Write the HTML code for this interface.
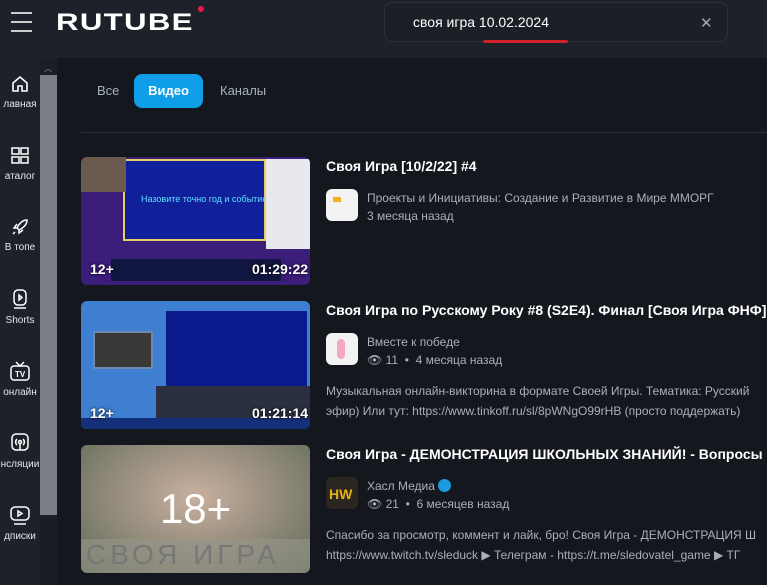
<!DOCTYPE html>
<html><head><meta charset="utf-8"><style>
*{margin:0;padding:0;box-sizing:border-box}
body{width:767px;height:585px;overflow:hidden;background:#14171d;font-family:"Liberation Sans","DejaVu Sans",sans-serif;color:#fff;position:relative}
.hdr{position:absolute;left:0;top:0;width:767px;height:58px;background:#1d2129}
.side{position:absolute;left:0;top:58px;width:40px;height:527px;background:#1d2129}
.sb{position:absolute;left:40px;top:58px;width:17px;height:527px;background:#1a1d23}
.thumbbar{position:absolute;left:40px;top:75px;width:17px;height:440px;background:#7c7e84}
.nav{position:absolute;left:0;width:40px;text-align:center;font-size:10px;color:#e6e6e6;white-space:nowrap;overflow:hidden}
.nav svg{display:block;margin:0 auto 5px}
.tab{position:absolute;top:74px;height:34px;line-height:34px;font-size:13px;color:#a8b3c0}
.title{position:absolute;left:326px;font-size:14px;font-weight:bold;color:#fff;white-space:nowrap}
.meta{position:absolute;left:367px;font-size:12px;color:#a9b0ba;line-height:18px;white-space:nowrap}
.desc{position:absolute;left:326px;font-size:12px;color:#a9b0ba;line-height:20px;white-space:nowrap}
.av{position:absolute;left:326px;width:32px;height:32px;border-radius:6px;background:#f3f3f3}
.th{position:absolute;left:81px;width:229px;height:128px;border-radius:6px;overflow:hidden}
.badge{position:absolute;font-size:14px;font-weight:bold;color:#fff;text-shadow:0 0 3px #000}
</style></head><body>
<div class="hdr">
 <div style="position:absolute;left:11px;top:12px;width:21px;height:2px;background:#ccc"></div>
 <div style="position:absolute;left:11px;top:21px;width:21px;height:2px;background:#ccc"></div>
 <div style="position:absolute;left:11px;top:30px;width:21px;height:2px;background:#ccc"></div>
 <div style="position:absolute;left:56px;top:9px;font-size:24px;font-weight:bold;letter-spacing:1px;color:#fff;transform:scaleX(1.3);transform-origin:left top">RUTUBE</div>
 <div style="position:absolute;left:198px;top:6px;width:6px;height:6px;border-radius:50%;background:#e8194c"></div>
 <div style="position:absolute;left:384px;top:2px;width:344px;height:40px;border:1px solid #2c313a;border-radius:8px;background:#1b1f26"></div>
 <div style="position:absolute;left:413px;top:14px;font-size:14px;color:#fff">своя игра 10.02.2024</div>
 <div style="position:absolute;left:483px;top:40px;width:85px;height:3px;background:#d0202a;border-radius:2px"></div>
 <div style="position:absolute;left:700px;top:14px;font-size:15px;color:#aaa">✕</div>
</div>
<div class="side"></div>
<div class="sb"></div><div class="thumbbar"></div>
<div style="position:absolute;left:44px;top:63px;color:#999;font-size:8px">︿</div>
<div class="nav" style="top:74px"><svg width="20" height="20" viewBox="0 0 20 20" fill="none" stroke="#fff" stroke-width="1.6"><path d="M3 9L10 3l7 6v8h-5v-5H8v5H3z"/></svg>лавная</div>
<div class="nav" style="top:146px"><svg width="20" height="20" viewBox="0 0 20 20" fill="none" stroke="#fff" stroke-width="1.5"><rect x="2" y="2" width="7" height="6"/><rect x="11" y="2" width="7" height="6"/><rect x="2" y="11" width="7" height="6"/><rect x="11" y="11" width="7" height="6"/></svg>аталог</div>
<div class="nav" style="top:217px"><svg width="20" height="20" viewBox="0 0 20 20" fill="none" stroke="#fff" stroke-width="1.5"><path d="M17 3c-5 0-8 4-10 8l2 2c4-2 8-5 8-10zM7 11l-3 0 3-4M9 13v3l4-3M5 15l-2 2"/></svg>В топе</div>
<div class="nav" style="top:288px"><svg width="20" height="22" viewBox="0 0 20 22" fill="none" stroke="#fff" stroke-width="1.5"><rect x="4" y="2" width="12" height="15" rx="4"/><path d="M9 7l3 2.5-3 2.5z"/><path d="M4 20h12"/></svg>Shorts</div>
<div class="nav" style="top:360px"><svg width="22" height="22" viewBox="0 0 22 22" fill="none" stroke="#fff" stroke-width="1.5"><path d="M7 2l4 4 4-4"/><rect x="2" y="6" width="18" height="14" rx="3"/><text x="6" y="17" font-size="8" fill="#fff" stroke="none" font-family="Liberation Sans" font-weight="bold">TV</text></svg>онлайн</div>
<div class="nav" style="top:432px"><svg width="20" height="22" viewBox="0 0 20 22" fill="none" stroke="#fff" stroke-width="1.5"><rect x="2" y="2" width="16" height="16" rx="4"/><circle cx="10" cy="10" r="1.5"/><path d="M7 7a4 4 0 000 6M13 7a4 4 0 010 6M10 12v6"/></svg>нсляции</div>
<div class="nav" style="top:504px"><svg width="22" height="22" viewBox="0 0 22 22" fill="none" stroke="#fff" stroke-width="1.5"><rect x="2" y="3" width="18" height="13" rx="4"/><path d="M9 7l4 2.5-4 2.5z"/><path d="M5 20h12"/></svg>дписки</div>

<div class="tab" style="left:97px">Все</div>
<div class="tab" style="left:134px;width:69px;background:#0f9ee8;border-radius:8px;color:#fff;font-weight:bold;text-align:center">Видео</div>
<div class="tab" style="left:220px">Каналы</div>
<div style="position:absolute;left:81px;top:132px;width:686px;height:1px;background:#2c313a"></div>

<div class="th" style="top:157px;background:#3b1d7a">
 <div style="position:absolute;left:42px;top:2px;width:143px;height:82px;background:#10209a;border:2px solid #e8d060"></div>
 <div style="position:absolute;left:60px;top:37px;font-size:9px;color:#5be0ff">Назовите точно год и событие</div>
 <div style="position:absolute;left:0;top:0;width:45px;height:35px;background:#6a5a50"></div>
 <div style="position:absolute;left:185px;top:2px;width:44px;height:90px;background:#e8e8ef"></div>
 <div style="position:absolute;left:30px;top:102px;width:170px;height:22px;background:#111640"></div>
 <div class="badge" style="left:9px;top:104px">12+</div>
 <div class="badge" style="left:171px;top:104px">01:29:22</div>
</div>
<div class="title" style="top:158px">Своя Игра [10/2/22] #4</div>
<div class="av" style="top:189px"><div style="position:absolute;left:7px;top:8px;width:8px;height:5px;background:#f3b21b"></div></div>
<div class="meta" style="top:189px">Проекты и Инициативы: Создание и Развитие в Мире ММОРГ<br>3 месяца назад</div>

<div class="th" style="top:301px;background:#3f7fd2">
 <div style="position:absolute;left:85px;top:10px;width:141px;height:77px;background:#0b1a8c"></div>
 <div style="position:absolute;left:12px;top:30px;width:60px;height:38px;background:#3a3836;border:2px solid #6c8ab0"></div>
 <div style="position:absolute;left:75px;top:85px;width:154px;height:32px;background:#2a3040"></div>
 <div style="position:absolute;left:0;top:117px;width:229px;height:11px;background:#15307a"></div>
 <div class="badge" style="left:9px;top:104px">12+</div>
 <div class="badge" style="left:171px;top:104px">01:21:14</div>
</div>
<div class="title" style="top:302px">Своя Игра по Русскому Року #8 (S2E4). Финал [Своя Игра ФНФ]</div>
<div class="av" style="top:333px"><div style="position:absolute;left:11px;top:6px;width:8px;height:20px;background:#f2a8bf;border-radius:4px"></div></div>
<div class="meta" style="top:333px">Вместе к победе<br>👁 11 &nbsp;•&nbsp; 4 месяца назад</div>
<div class="desc" style="top:381px">Музыкальная онлайн-викторина в формате Своей Игры. Тематика: Русский<br>эфир) Или тут: https://www.tinkoff.ru/sl/8pWNgO99rHB (просто поддержать)</div>

<div class="th" style="top:445px;background:radial-gradient(ellipse at 50% 40%,#c9b0a0 0%,#9a9080 45%,#5f6a55 100%)">
 <div style="position:absolute;left:0;top:94px;width:229px;height:34px;background:rgba(150,150,140,.6)"></div>
 <div style="position:absolute;left:5px;top:94px;font-size:28px;color:#777;letter-spacing:4px">СВОЯ ИГРА</div>
 <div style="position:absolute;left:0;top:40px;width:229px;text-align:center;font-size:42px;color:#fff">18+</div>
</div>
<div class="title" style="top:446px">Своя Игра - ДЕМОНСТРАЦИЯ ШКОЛЬНЫХ ЗНАНИЙ! - Вопросы с</div>
<div class="av" style="top:477px;background:#2b2620"><div style="position:absolute;left:3px;top:9px;font-size:14px;font-weight:bold;color:#e3b21a">HW</div></div>
<div class="meta" style="top:477px">Хасл Медиа <span style="display:inline-block;width:13px;height:13px;border-radius:50%;background:#1a9be0;vertical-align:-2px"></span><br>👁 21 &nbsp;•&nbsp; 6 месяцев назад</div>
<div class="desc" style="top:525px">Спасибо за просмотр, коммент и лайк, бро! Своя Игра - ДЕМОНСТРАЦИЯ Ш<br>https://www.twitch.tv/sleduck ▶ Телеграм - https://t.me/sledovatel_game ▶ ТГ</div>
</body></html>
